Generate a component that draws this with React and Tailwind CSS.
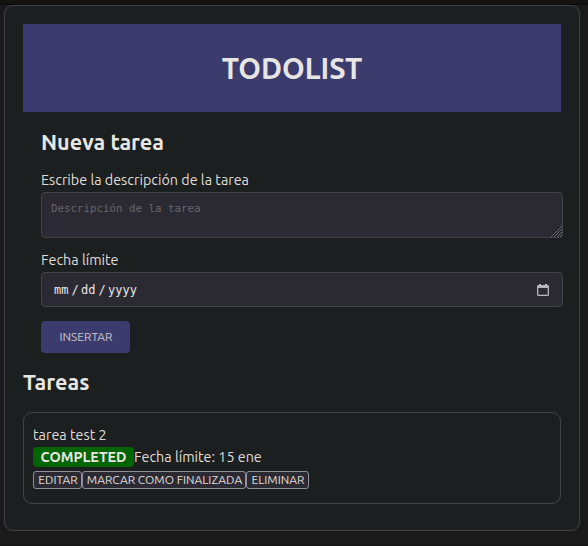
function ActionButton({ children, className }) {
  return (
    <button className={`flex h-[18px] shrink-0 items-center justify-center rounded-[3px] border border-[#8f8f9d] bg-[#2b2a33] pl-px text-[11.94px] leading-[16px] whitespace-nowrap ${className}`}>
      {children}
    </button>
  );
}

function CalendarIcon() {
  return (
    <svg width="12" height="12" viewBox="0 0 12 12" fill="none">
      <path d="M2 0h2v1h4V0h2v1h1l1 1v9l-1 1H1l-1-1V2l1-1h1z M1 4v7h10V4z" fill="#b6b5b9" fillRule="evenodd" />
      <path d="M1 3.5h10M1 4v7h10V4" stroke="#b6b5b9" strokeWidth="0.6" />
    </svg>
  );
}

function ResizeGrip() {
  return (
    <svg className="absolute right-0 bottom-0" width="12" height="11" viewBox="0 0 12 11" stroke="#7d7c81" strokeWidth="0.8">
      <path d="M1 11L12 0M4 11L12 3M7 11L12 6M10 11L12 9" />
      <path d="M0 10.5L10.5 0M2.5 11L12 1.5M5.5 11L12 4.5M8.5 11L12 7.5" stroke="#18171c" strokeWidth="0.7" />
    </svg>
  );
}

export default function App() {
  return (
    <div className="flex h-[546px] w-[588px] flex-col overflow-hidden border-b border-[#241416] bg-[#1a1a1b] font-['Ubuntu','Noto_Sans',sans-serif] text-[#e0ddd8]">
      <div className="h-[5px] shrink-0 border-b border-[#0c0c0c] bg-[#14130f]" />
      <main className="ml-1 h-[526px] w-[576px] shrink-0 rounded-[9px] border border-[#404446] bg-[#1b1f20] p-[18px]">
        <header className="flex h-[88px] items-center justify-center bg-[#3c3b6e]">
          <h1 className="text-[28.8px] leading-[36px] font-semibold text-[#e8e6e3]">TODOLIST</h1>
        </header>
        <section className="ml-[18px] w-[522px] pt-[16px]">
          <h2 className="h-[28px] text-[21.6px] leading-[28px] font-semibold whitespace-nowrap text-[#e8e6e3]">Nueva tarea</h2>
          <label className="mt-[14px] block h-[20px] text-[14.33px] leading-[20px] whitespace-nowrap">Escribe la descripción de la tarea</label>
          <div className="relative mt-[2px] h-[46px] rounded-[4px] border border-[#404446] bg-[#2b2a33] px-[9px] pt-[9px] font-['DejaVu_Sans_Mono',monospace] text-[10.8px] leading-[14px] text-[#67666a]">
            Descripción de la tarea
            <ResizeGrip />
          </div>
          <label className="mt-[12px] block h-[20px] text-[14.33px] leading-[20px] whitespace-nowrap">Fecha límite</label>
          <div className="mt-[2px] flex h-[35px] items-center justify-between rounded-[4px] border border-[#404446] bg-[#2b2a33] pr-[13px] pl-[12px] font-['DejaVu_Sans_Mono',monospace] text-[12px] text-[#e8e6e3]">
            <div className="flex">
              <span className="w-[15px]">mm</span>
              <span className="w-[12px] text-center">/</span>
              <span className="w-[15px]">dd</span>
              <span className="w-[12px] text-center">/</span>
              <span>yyyy</span>
            </div>
            <CalendarIcon />
          </div>
          <button className="mt-[14px] block h-[32px] w-[89px] rounded-[4px] bg-[#3c3b6e] pl-px text-[11.94px] leading-[32px] text-[#c9c6c8]">INSERTAR</button>
        </section>
        <h2 className="mt-[15px] h-[28px] text-[21.6px] leading-[28px] font-semibold text-[#e8e6e3]">Tareas</h2>
        <article className="mt-[16px] h-[92px] rounded-[9px] border border-[#404446] px-[9px] pt-[12px]">
          <p className="h-[20px] text-[14.33px] leading-[20px]">tarea test 2</p>
          <div className="mt-[2px] flex h-[20px] items-center">
            <span className="h-[20px] w-[101px] shrink-0 rounded-[4px] bg-[#006400] text-center text-[14.33px] leading-[20px] font-semibold text-[#e8e6e3]">COMPLETED</span>
            <span className="text-[14.33px] leading-[20px] whitespace-nowrap">Fecha límite: 15 ene</span>
          </div>
          <div className="mt-[4px] flex">
            <ActionButton className="w-[49px]">EDITAR</ActionButton>
            <ActionButton className="w-[164px]">MARCAR COMO FINALIZADA</ActionButton>
            <ActionButton className="w-[63px]">ELIMINAR</ActionButton>
          </div>
        </article>
      </main>
    </div>
  );
}
